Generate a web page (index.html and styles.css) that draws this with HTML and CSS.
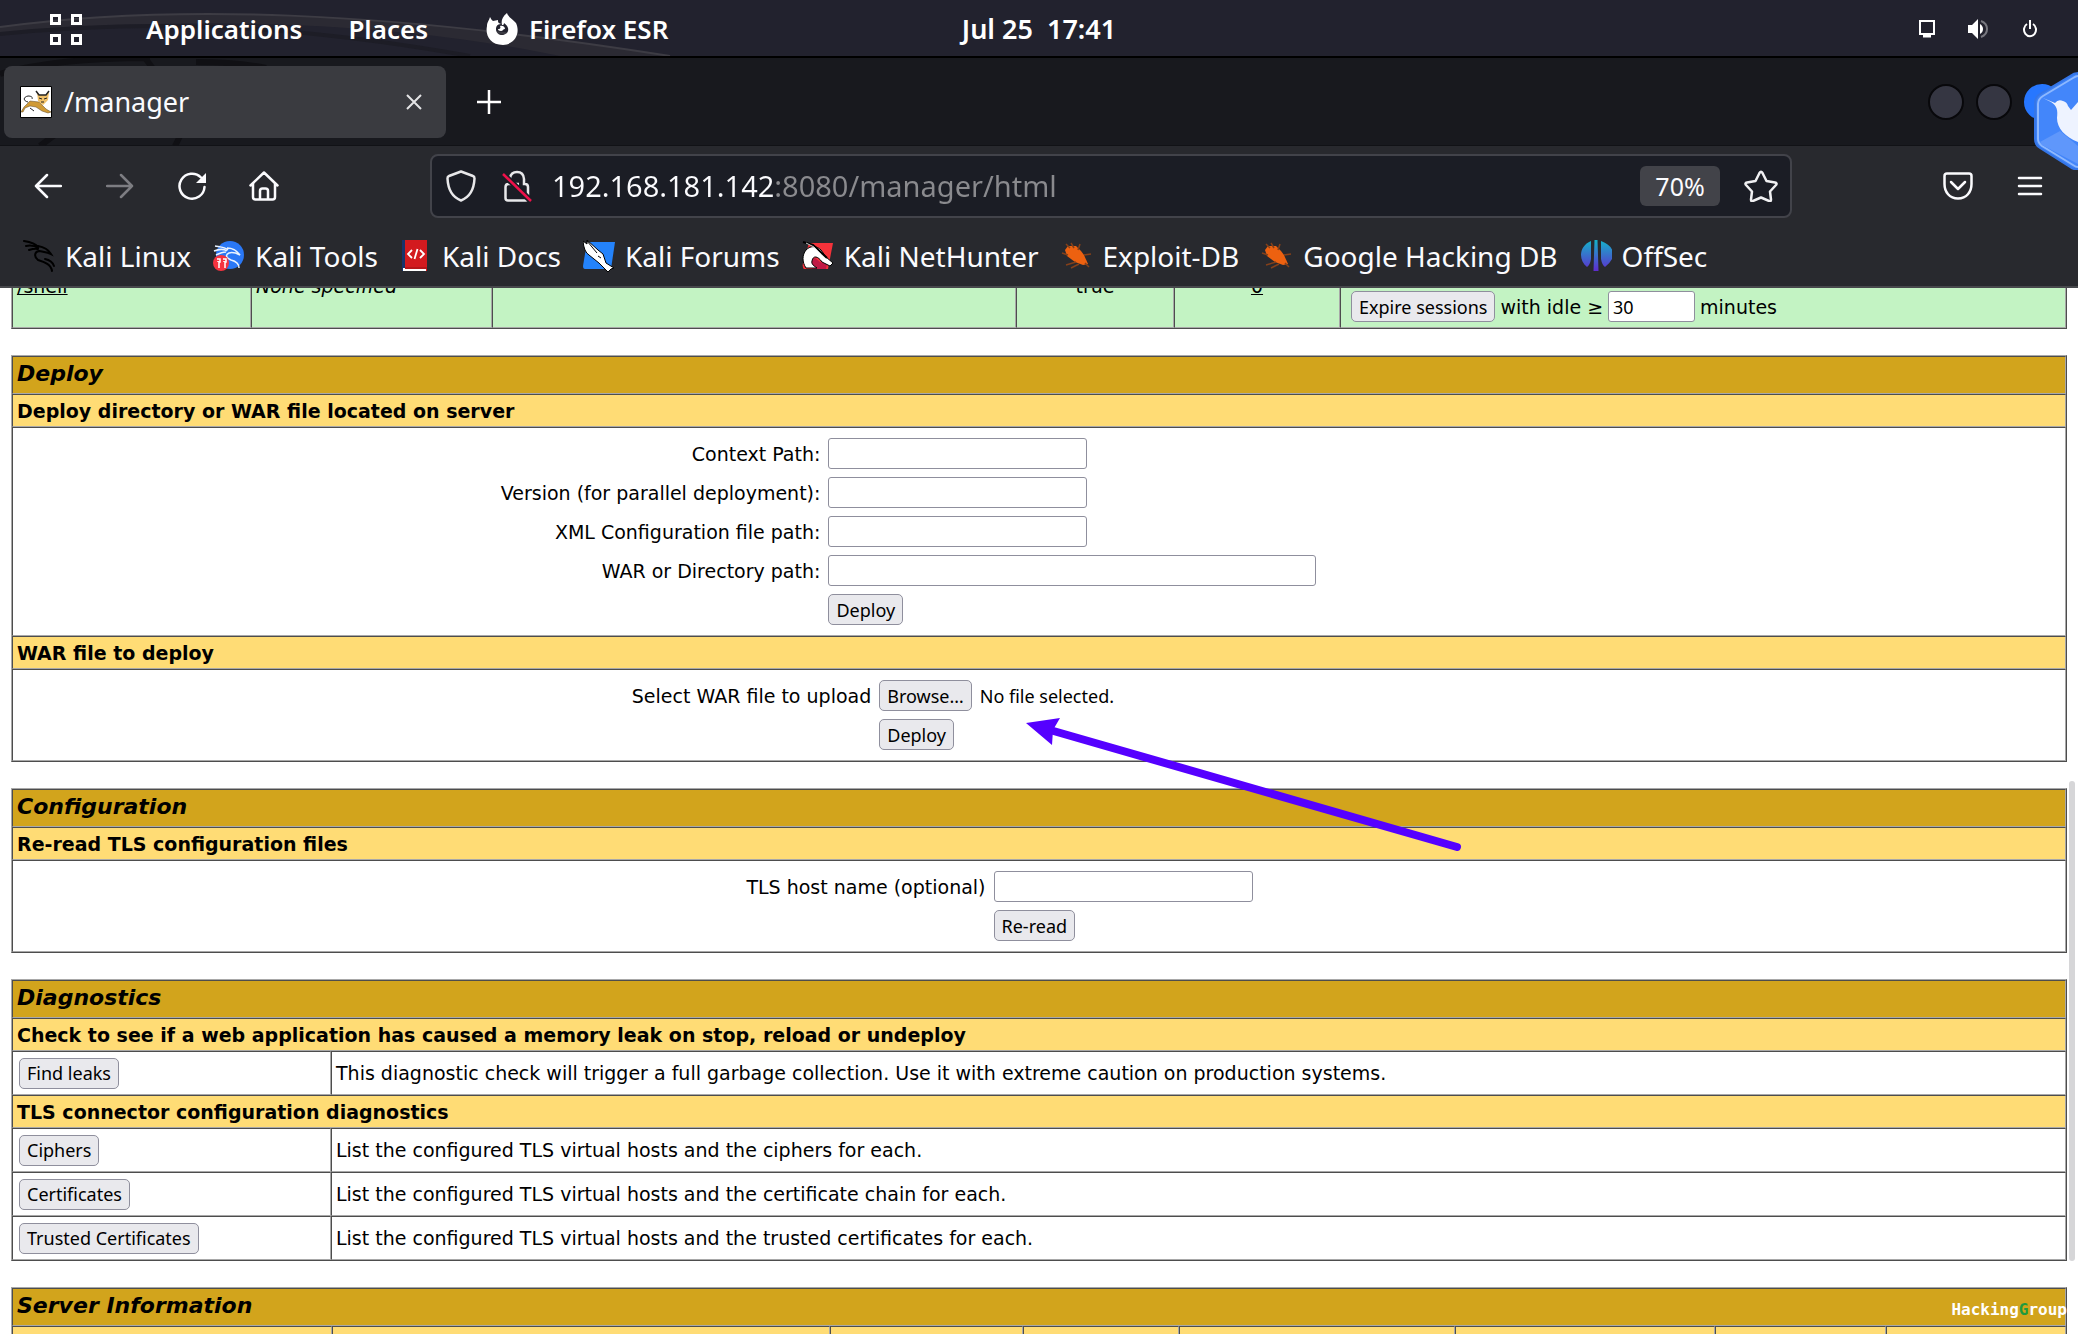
FILE: index.html
```html
<!DOCTYPE html>
<html lang="en">
<head>
<meta charset="utf-8">
<title>/manager</title>
<link rel="stylesheet" href="styles.css">
</head>
<body>
<header class="panel">
  <svg class="panel-art" width="700" height="56" viewBox="0 0 700 56" fill="none" aria-hidden="true">
    <path d="M0 27 C170 4 380 10 670 56 L560 56 C400 22 180 14 0 34Z" fill="#2b2a33"/>
    <path d="M0 27 C170 4 380 10 670 56" stroke="#3d3c44" stroke-width="2"/>
    <path d="M0 34 C160 18 300 26 470 56" stroke="#1d1d26" stroke-width="4"/>
  </svg>
  <nav class="panel-left">
    <button class="panel-item grid-item" aria-label="Activities">
      <svg width="32" height="32" viewBox="0 0 32 32" fill="none" stroke="#fff" stroke-width="3"><path d="M1.500 2.500h8v8h-8zM22.500 2.500h8v8h-8zM1.500 22.500h8v8h-8zM22.500 22.500h8v8h-8z"/></svg>
    </button>
    <button class="panel-item">Applications</button>
    <button class="panel-item">Places</button>
    <button class="panel-item app-item">
      <svg width="32" height="32" viewBox="0 0 32 32" fill="#fff"><path fill-rule="evenodd" d="M4 4c1 1 1 3 3 4l5-1c0 2 0 3 3 4-4 0-5 3-5 5 0 4 3 6 6 6 4 0 7-3 6-7-1-3-3-4-4-5 0 2-1 2-2 2-1-4 0-8 5-12 1 4 6 6 9 10 4 8 1 21-13 22C4 32-1 22 1 13 1 9 3 8 4 4ZM14 13c3-1 5 1 5 3-2 0-2 2-4 2s-3-1-3-2c2 0 3-1 2-3Z"/></svg>
      Firefox ESR
    </button>
  </nav>
  <time class="clock">Jul 25&nbsp; 17:41</time>
  <div class="tray">
    <button class="tray-item" aria-label="Display"><svg width="18" height="20" viewBox="0 0 18 20" fill="none" stroke="#fff" stroke-width="2"><path d="M2 2h14v13H2z"/><path d="M5 17h8" stroke-width="3"/></svg></button>
    <button class="tray-item" aria-label="Volume"><svg width="22" height="20" viewBox="0 0 22 20" fill="#fff"><path d="M0 6h4l6-6v20l-6-6H0z"/><path d="M12 5c4 2 4 8 0 10z"/><path d="M13 2c8 3 8 13 0 16" fill="none" stroke="#77777f" stroke-width="2"/></svg></button>
    <button class="tray-item" aria-label="Power"><svg width="16" height="20" viewBox="0 0 16 20" fill="none" stroke="#fff" stroke-width="2"><path d="M5 5a6 6.500 0 1 0 6 0M8 1v9"/></svg></button>
  </div>
</header>

<div class="tabstrip">
  <svg class="tabstrip-art" width="300" height="88" viewBox="0 0 300 88" fill="none" aria-hidden="true">
    <path d="M0 16C40 4 90 0 150 0M196 4c30 0 50 2 70 6M145 0l12 16M40 88l40-30M175 88l10-20" stroke="#101014" stroke-width="6"/>
  </svg>
  <div class="tab">
    <svg width="32" height="32" viewBox="0 0 32 32" aria-hidden="true"><path d="M.5.5h31v31H.5z" fill="#fff" stroke="#000"/><path d="M1 26l3-5 6-6 9 1 3 3 4 4 5 3-3 1-6-2-6-4-6-1-5 2-2 4z" fill="#d09a35" stroke="#5a4420" stroke-width=".5"/><path d="M17 6l3 3h6l3-3-1 8-5 5-5-4z" fill="#f0c068"/><path d="M16 5l3 4h7l3-4" fill="none" stroke="#222" stroke-width="1.500"/><path d="M8 16c-5-1-5-5 0-6 3 0 5 1 4 3M10 22l4 3M19 12l3 1M27 12l-3 1M21 16h3" fill="none" stroke="#222"/></svg>
    <span class="tab-title">/manager</span>
    <button class="tab-close" aria-label="Close tab"><svg width="16" height="16" viewBox="0 0 16 16" fill="none" stroke="#e4e4e6" stroke-width="2"><path d="M1 1l14 14M15 1L1 15"/></svg></button>
  </div>
  <button class="new-tab" aria-label="New tab"><svg width="24" height="24" viewBox="0 0 24 24" fill="none" stroke="#fff" stroke-width="2.500"><path d="M12 0v24M0 12h24"/></svg></button>
  <div class="window-buttons">
    <button class="win" aria-label="Minimize"></button>
    <button class="win" aria-label="Maximize"></button>
    <button class="win win-close" aria-label="Close"></button>
  </div>
</div>

<div class="navbar">
  <button class="nav-btn" aria-label="Back"><svg width="28" height="26" viewBox="0 0 28 26" fill="none" stroke="#fbfbfe" stroke-width="2.500" stroke-linecap="round" stroke-linejoin="round"><path d="M27 13H2M13 2L2 13l11 11"/></svg></button>
  <button class="nav-btn" aria-label="Forward"><svg width="28" height="26" viewBox="0 0 28 26" fill="none" stroke="#7d7d82" stroke-width="2.500" stroke-linecap="round" stroke-linejoin="round"><path d="M1 13h25M15 2l11 11-11 11"/></svg></button>
  <button class="nav-btn" aria-label="Reload"><svg width="30" height="30" viewBox="0 0 30 30" fill="none" stroke="#fbfbfe" stroke-width="2.500" stroke-linecap="round"><path d="M24 6.500A12.500 12.500 0 1 0 27.500 16"/><path d="M29 2v10H19z" fill="#fbfbfe" stroke="none"/></svg></button>
  <button class="nav-btn" aria-label="Home"><svg width="30" height="30" viewBox="0 0 30 30" fill="none" stroke="#fbfbfe" stroke-width="2.500" stroke-linecap="round" stroke-linejoin="round"><path d="M1.500 14.500L15 1.500l13.500 13M4 12.500V26q0 2.500 2.500 2.500h17Q26 28.500 26 26V12.500M11 28v-8q0-2.500 2.500-2.500h3q2.500 0 2.500 2.500v8"/></svg></button>
  <div class="spacer"></div>
  <div class="urlbar">
    <svg width="30" height="32" viewBox="0 0 30 32" fill="none" stroke="#e8e8ea" stroke-width="2.500" stroke-linejoin="round"><path d="M15 1.500L27 6q1.500.5 1.500 2.500C28 19 24 27 15 30.500 6 27 2 19 1.500 8.500 1.500 6.500 2 6.500 3 6z"/></svg>
    <svg class="lock" width="30" height="32" viewBox="0 0 30 32" fill="none" stroke="#e8e8ea" stroke-width="2.500"><path d="M8 14V8q1-6 7-6 6.500 0 7 7v5h1q3 0 3 3v11q0 2.500-2.500 2.500H6Q3.500 30.500 3.500 28V17q0-3 3-3H17"/><path d="M1 4l28 27" stroke="#1b1d25" stroke-width="6"/><path d="M1 4l28 27" stroke="#f0114a" stroke-width="2.500"/></svg>
    <input class="url" type="text" value="192.168.181.142:8080/manager/html" aria-label="Address">
    <button class="zoom">70%</button>
    <button class="star" aria-label="Bookmark this page"><svg width="34" height="32" viewBox="0 0 34 32" fill="none" stroke="#f0f0f2" stroke-width="2.500" stroke-linejoin="round"><path d="M15.500 3q1.500-2.500 3 0l4 8 8.500 1.500q2.500.5 1 2.500l-6 6.500 1 8q0 2.500-2 1.500l-8-3.500L9 31q-2 1-2-1.500l1-8L2 15q-1.500-2 1-2.500L11.500 11z"/></svg></button>
  </div>
  <div class="spacer"></div>
  <button class="nav-btn" aria-label="Pocket"><svg width="30" height="28" viewBox="0 0 30 28" fill="none" stroke="#fbfbfe" stroke-width="2.500" stroke-linecap="round" stroke-linejoin="round"><path d="M4 1.500h22q2.500 0 2.500 2.500v8c0 8-5 14.500-13.500 14.500S1.500 20 1.500 12V4Q1.500 1.500 4 1.500zM8 10l7 7 7-7"/></svg></button>
  <button class="nav-btn" aria-label="Menu"><svg width="26" height="20" viewBox="0 0 26 20" fill="none" stroke="#fbfbfe" stroke-width="2.500" stroke-linecap="round"><path d="M2 2h22M2 10h22M2 18h22"/></svg></button>
</div>

<nav class="bookmarks">
  <a class="bookmark" href="#"><svg width="32" height="32" viewBox="0 0 32 32" fill="none" stroke="#000" stroke-width="2" stroke-linecap="round"><path d="M1 1c6 1 11 2 14 6M3 6c5-1 9 0 12 2M6 10c3-1 6-2 9-1M15 6c6 1 10 3 13 8-4-2-8-2-12-3-5 1-5 6-1 9 6 2 13 4 14 11M22 19c5 1 8 4 9 7"/></svg>Kali Linux</a>
  <a class="bookmark" href="#"><svg width="32" height="32" viewBox="0 0 32 32" fill="none"><circle cx="17" cy="15" r="14" fill="#2a78f6"/><path d="M2 6c6 1 10 1 13 4M1 11c5-2 10-2 13 0M3 15c4-2 7-3 10-3M14 8c7 0 10 3 13 7-4-2-8-3-11-2-4 2-3 5 2 7 4 1 8 3 8 8" stroke="#eaf3ff" stroke-width="1.500"/><circle cx="8" cy="23" r="8" fill="#f5333f"/><path d="M4 19h3v3H6v6M10 19h3v3h-1v6M5 21v1M11 21v1" stroke="#fff" stroke-width="1.500"/></svg>Kali Tools</a>
  <a class="bookmark" href="#"><svg width="32" height="32" viewBox="0 0 32 32" fill="none"><path d="M2 0h4v31H2z" fill="#17336b"/><path d="M5 0h22v31H5z" fill="#d31a1f"/><path d="M3 28h23v3H3z" fill="#fff"/><path d="M5 27h22v2H5z" fill="#b5161a"/><path d="M12 10l-4 4 4 4M20 10l4 4-4 4M17.500 9l-3 10" stroke="#fff" stroke-width="1.800"/></svg>Kali Docs</a>
  <a class="bookmark" href="#"><svg width="32" height="32" viewBox="0 0 32 32"><path d="M4 2h28l-4 27H2q-2 0-2-3z" fill="#2483fb"/><path d="M0 1l4 3V0l11 10 5 4 3 9 8 5-3 1-3 3-9-9-10-8Q1 12 0 1z" fill="#fff" stroke="#000"/><path d="M4 1l10 12M15 16l3 2" stroke="#000"/></svg>Kali Forums</a>
  <a class="bookmark" href="#"><svg width="32" height="32" viewBox="0 0 32 32"><path d="M7 3h24l-5 26H2q-2-2-1-6z" fill="#f5323a"/><path d="M10 29c-3-5-2-10 3-11l5 4 7 2-1 5z" fill="#c01a45"/><path d="M4 28C0 22 0 15 4 10c5-5 11-4 15 0l5 7 7 6-3 3-8-4c-4-6-9-7-10-1-1 3 2 5 5 7z" fill="#fff" stroke="#000"/><path d="M1 2l10 3 14 13" fill="none" stroke="#000" stroke-width="2"/><path d="M4 3l8 4 7 7" fill="none" stroke="#ccc"/></svg>Kali NetHunter</a>
  <a class="bookmark" href="#"><svg width="32" height="32" viewBox="0 0 32 32"><path d="M4 10l3-4 8 0 5 5 3 4 4 9-5 1-8-3-8-6z" fill="#ed6110"/><path d="M10 3l3 5M1 13l6 2M30 14l-7 1M5 25l10-3M10 28l8-4M28 27l-4-4M19 4l-2 6M5 4l4 4" stroke="#84401a" stroke-width="1.500"/></svg>Exploit-DB</a>
  <a class="bookmark" href="#"><svg width="32" height="32" viewBox="0 0 32 32"><path d="M4 10l3-4 8 0 5 5 3 4 4 9-5 1-8-3-8-6z" fill="#ed6110"/><path d="M10 3l3 5M1 13l6 2M30 14l-7 1M5 25l10-3M10 28l8-4M28 27l-4-4M19 4l-2 6M5 4l4 4" stroke="#84401a" stroke-width="1.500"/></svg>Google Hacking DB</a>
  <a class="bookmark" href="#"><svg width="32" height="32" viewBox="0 0 32 32"><defs><linearGradient id="off" x1="0" y1="0" x2="0" y2="1"><stop offset="0" stop-color="#14b3c9"/><stop offset="1" stop-color="#5f2bd0"/></linearGradient></defs><path d="M11 1v18q-1 6-4 8C-2 20-1 6 11 1zM21 1v18q1 6 4 8 9-7 8-14Q32 5 21 1zM14.500 0h3l1 31h-5z" fill="url(#off)"/></svg>OffSec</a>
</nav>

<main class="viewport">
  <div class="page">
    <table class="grid apps">
      <colgroup><col class="a1"><col class="a2"><col class="a3"><col class="a4"><col class="a5"><col class="a6"></colgroup>
      <tr>
        <td><a href="#">/shell</a></td>
        <td><i>None specified</i></td>
        <td></td>
        <td class="mid">true</td>
        <td class="mid"><a href="#">0</a></td>
        <td class="commands">
          <form class="expire">
            <button type="button">Expire sessions</button>
            <label for="idle">with idle ≥</label>
            <input id="idle" class="short" type="text" value="30">
            <span>minutes</span>
          </form>
        </td>
      </tr>
    </table>

    <table class="grid">
      <tr><th class="title">Deploy</th></tr>
      <tr><th class="sub">Deploy directory or WAR file located on server</th></tr>
      <tr><td>
        <table class="form">
          <tr><td><label for="ctx">Context Path:</label></td><td><input id="ctx" type="text"></td></tr>
          <tr><td><label for="ver">Version (for parallel deployment):</label></td><td><input id="ver" type="text"></td></tr>
          <tr><td><label for="xml">XML Configuration file path:</label></td><td><input id="xml" type="text"></td></tr>
          <tr><td><label for="war">WAR or Directory path:</label></td><td><input id="war" class="long" type="text"></td></tr>
          <tr><td></td><td><button type="button">Deploy</button></td></tr>
        </table>
      </td></tr>
      <tr><th class="sub">WAR file to deploy</th></tr>
      <tr><td>
        <table class="form">
          <tr><td><label for="upload">Select WAR file to upload</label></td><td><div class="file"><input id="upload" class="file-native" type="file" tabindex="-1"><button type="button">Browse…</button><span>No file selected.</span></div></td></tr>
          <tr><td></td><td><button type="button">Deploy</button></td></tr>
        </table>
      </td></tr>
    </table>

    <table class="grid">
      <tr><th class="title">Configuration</th></tr>
      <tr><th class="sub">Re-read TLS configuration files</th></tr>
      <tr><td>
        <table class="form">
          <tr><td><label for="tls">TLS host name (optional)</label></td><td><input id="tls" type="text"></td></tr>
          <tr><td></td><td><button type="button">Re-read</button></td></tr>
        </table>
      </td></tr>
    </table>

    <table class="grid diag">
      <colgroup><col class="d1"><col></colgroup>
      <tr><th class="title" colspan="2">Diagnostics</th></tr>
      <tr><th class="sub" colspan="2">Check to see if a web application has caused a memory leak on stop, reload or undeploy</th></tr>
      <tr class="tool"><td><button type="button">Find leaks</button></td><td>This diagnostic check will trigger a full garbage collection. Use it with extreme caution on production systems.</td></tr>
      <tr><th class="sub" colspan="2">TLS connector configuration diagnostics</th></tr>
      <tr class="tool"><td><button type="button">Ciphers</button></td><td>List the configured TLS virtual hosts and the ciphers for each.</td></tr>
      <tr class="tool"><td><button type="button">Certificates</button></td><td>List the configured TLS virtual hosts and the certificate chain for each.</td></tr>
      <tr class="tool"><td><button type="button">Trusted Certificates</button></td><td>List the configured TLS virtual hosts and the trusted certificates for each.</td></tr>
    </table>

    <table class="grid server">
      <colgroup><col class="s1"><col class="s2"><col class="s3"><col class="s4"><col class="s5"><col class="s6"><col class="s7"><col class="s8"></colgroup>
      <tr><th class="title" colspan="8">Server Information</th></tr>
      <tr class="heads"><th class="sub">Tomcat Version</th><th class="sub">JVM Version</th><th class="sub">JVM Vendor</th><th class="sub">OS Name</th><th class="sub">OS Version</th><th class="sub">OS Architecture</th><th class="sub">Hostname</th><th class="sub">IP Address</th></tr>
    </table>
  </div>
  <div class="scroll-thumb"></div>
</main>

<svg class="arrow" width="440" height="142" viewBox="0 0 440 142" aria-hidden="true"><path d="M24 14L431 131" stroke="#5500ff" stroke-width="8" stroke-linecap="round"/><path d="M0 7l34-5-7 12-1 15z" fill="#5500ff"/></svg>

<svg class="bird" width="44" height="98" viewBox="0 0 44 98" aria-hidden="true">
  <path d="M44 1Q40 1 36 4L6 22Q1 25 1 31v36q0 6 5 9l30 19q4 3 8 2z" fill="#3c80f5" stroke="#3576e8" stroke-width="2"/>
  <path d="M44 4q-2 0-5 2L9 24q-5 3-5 8v35q0 4 4 7l31 19q3 2 5 2" fill="#4386fa" stroke="#8db8ff" stroke-width="2"/>
  <path d="M6 70l20-11 18 15v18L8 73z" fill="#5f97fb"/>
  <path d="M9 26l12 5q3-4 8-2 4 1 5 5l3 4 7-8v40c-13-5-21-14-21-24 1-8 0-12-6-16z" fill="#eef3ff"/>
</svg>

<div class="watermark">Hacking<span class="g">G</span>roup</div>
</body>
</html>
```
FILE: styles.css
```css
* { box-sizing: border-box; }

body {
  margin: 0;
  height: 100vh;
  overflow: hidden;
  display: flex;
  flex-direction: column;
  position: relative;
  background: #fff;
  color: #000;
  font: 19px/22px "DejaVu Sans", sans-serif;
}

svg { display: block; flex: none; }
button { font: inherit; color: inherit; cursor: pointer; }

/* Desktop panel */
.panel {
  flex: none;
  position: relative;
  display: grid;
  grid-template-columns: 1fr auto 1fr;
  align-items: center;
  height: 58px;
  padding: 2px 24px 0;
  border-bottom: 2px solid #000;
  background: #22222e;
  color: #fff;
  font: 600 26px/32px "Noto Sans", sans-serif;
}
.panel-art { position: absolute; left: 0; top: 0; }
.panel-left, .tray { display: flex; align-items: center; position: relative; }
.panel-item, .tray-item {
  display: flex;
  align-items: center;
  gap: 11px;
  padding: 0;
  border: 0;
  background: none;
}
.panel-left { gap: 46px; padding-left: 26px; }
.grid-item { margin-right: 18px; }
.app-item { margin-left: 12px; }
.clock { font-size: 27px; }
.tray { justify-content: flex-end; gap: 32px; padding-right: 16px; }

/* Tab strip */
.tabstrip {
  flex: none;
  position: relative;
  display: flex;
  align-items: center;
  height: 88px;
  padding: 0 18px 0 4px;
  background: #18191e;
  border-bottom: 1px solid #111216;
}
.tabstrip-art { position: absolute; left: 0; top: 0; }
.tab {
  position: relative;
  display: flex;
  align-items: center;
  gap: 12px;
  width: 442px;
  height: 72px;
  padding: 0 24px 0 16px;
  border-radius: 8px;
  background: #3a3b40;
  color: #fbfbfe;
  font: 27px/36px "Noto Sans", sans-serif;
}
.tab-title { flex: 1; }
.tab-close, .new-tab, .nav-btn, .star {
  display: flex;
  align-items: center;
  justify-content: center;
  padding: 0;
  border: 0;
  background: none;
}
.new-tab { width: 86px; height: 72px; }
.window-buttons { display: flex; gap: 12px; margin-left: auto; }
.win {
  width: 36px;
  height: 36px;
  padding: 0;
  border: 2px solid #08080b;
  border-radius: 50%;
  background: #353642;
}
.win-close { background: #2777ff; border-color: #2777ff; }

/* Navigation toolbar */
.navbar {
  flex: none;
  display: flex;
  align-items: center;
  height: 80px;
  padding: 0 12px;
  background: #28292e;
}
.nav-btn { width: 72px; height: 64px; }
.spacer { flex: 20; }
.urlbar {
  flex: 205;
  display: flex;
  align-items: center;
  height: 64px;
  padding: 0 12px 0 14px;
  border: 2px solid #42434a;
  border-radius: 8px;
  background: #1b1d25;
  color: #fbfbfe;
}
.lock { margin: 0 20px 0 26px; }
.url {
  flex: 1;
  min-width: 0;
  padding: 0;
  border: 0;
  outline: 0;
  font: 29px/40px "Noto Sans", sans-serif;
  color: #fbfbfe;
  -webkit-text-fill-color: transparent;
  background: linear-gradient(90deg, #fbfbfe 222px, #8a8a8e 222px);
  -webkit-background-clip: text;
  background-clip: text;
}
.zoom {
  height: 40px;
  width: 80px;
  padding: 0;
  border: 0;
  border-radius: 6px;
  background: #424349;
  font: 25px/40px "Noto Sans", sans-serif;
}
.star { margin-left: 24px; }

/* Bookmarks toolbar */
.bookmarks {
  flex: none;
  display: flex;
  gap: 22px;
  height: 62px;
  padding: 0 23px;
  border-bottom: 2px solid #47484c;
  background: #28292e;
}
.bookmark {
  display: flex;
  align-items: center;
  gap: 10px;
  color: #fbfbfe;
  font: 28px/36px "Noto Sans", sans-serif;
  white-space: nowrap;
  text-decoration: none;
}

/* Page content */
.viewport { flex: 1; min-height: 0; overflow: hidden; position: relative; }
.page {
  display: flex;
  flex-direction: column;
  gap: 26px;
  margin-top: -45px;
  padding: 0 11px;
}
.grid {
  width: 100%;
  border: 1px solid;
  border-color: #a8a8a8 #4d4d4d #4d4d4d #a8a8a8;
  border-spacing: 0;
}
.grid > * > tr > td, .grid > * > tr > th {
  padding: 4px;
  border: 1px solid;
  border-color: #4d4d4d #a8a8a8 #a8a8a8 #4d4d4d;
  text-align: left;
}
.grid > * > tr > .title {
  height: 38px;
  padding: 0 4px 2px;
  background: #d2a41c;
  font: italic bold 22px/26px "DejaVu Sans", sans-serif;
}
.grid > * > tr > .sub { height: 33px; padding: 0 4px; background: #ffdc75; }

.apps, .diag, .server { table-layout: fixed; }
.apps { background: #c3f3c3; }
.apps tr { height: 84px; }
.apps a { color: inherit; }
.grid > * > tr > .mid { text-align: center; }
.grid > * > tr > .commands { vertical-align: bottom; padding: 5px 10px; }
.a1 { width: 239px; }
.a2 { width: 241px; }
.a3 { width: 524px; }
.a4 { width: 158px; }
.a5 { width: 166px; }
.expire { display: flex; align-items: center; gap: 5px; }

.form { width: 100%; border-spacing: 4px; }
.form td { padding: 2px; }
.form td:first-child { text-align: right; }
.form td:last-child { padding-right: 7px; }

.page button, .page input { height: 31px; border: 1px solid #8f8f9d; }
.page button {
  display: block;
  padding: 0 7px;
  border-radius: 5px;
  background: #e9e9ed;
  font: 18px/28px "Noto Sans", sans-serif;
}
.page input {
  display: block;
  width: 259px;
  padding: 0 4px;
  border-radius: 3px;
  background: #fff;
  font: 18px/28px "Noto Sans", sans-serif;
}
.page .long { width: 488px; }
.page .short { width: 87px; }

.file { position: relative; display: flex; align-items: center; gap: 8px; width: 328px; font: 18px/28px "Noto Sans", sans-serif; }
.page .file-native { position: absolute; width: 96px; opacity: 0; }

.d1 { width: 319px; }
.tool { height: 44px; }
.grid > * > .tool > td { padding: 0 4px; }
.tool button { margin-left: 2px; }

.s1 { width: 320px; }
.s2 { width: 498px; }
.s3 { width: 193px; }
.s4 { width: 156px; }
.s5 { width: 276px; }
.s6 { width: 260px; }
.s7 { width: 171px; }
.grid > * > .heads > th { text-align: center; }

/* Overlays */
.scroll-thumb {
  position: absolute;
  right: 3px;
  top: 493px;
  width: 6px;
  height: 480px;
  border-radius: 3px;
  background: #d6d6d8;
}
.arrow { position: absolute; left: 1026px; top: 716px; }
.bird { position: absolute; right: 0; top: 72px; }
.watermark {
  position: absolute;
  right: 11px;
  bottom: 14px;
  color: #fff;
  font: bold 16px/20px "DejaVu Sans Mono", monospace;
}
.g { color: #1f9a3f; }
```
